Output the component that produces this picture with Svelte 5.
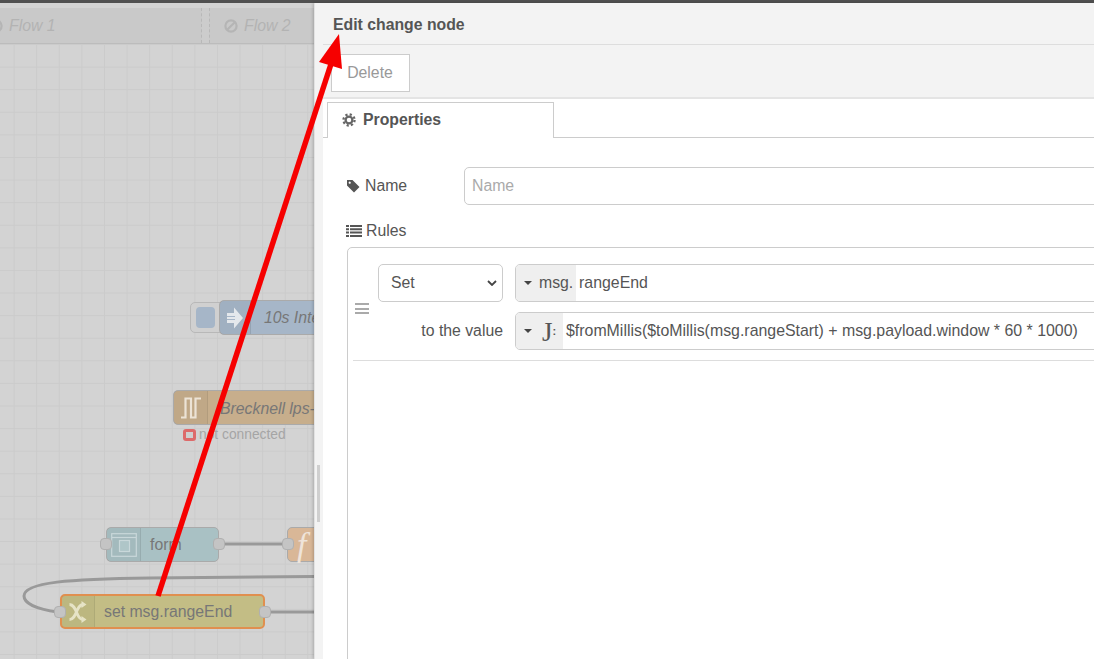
<script>
    // only the flow tabs come from data, the rest is static
    const tabs = [
        { label: "Flow 1", width: 202, padding: 0, iconShift: -11 },
        { label: "Flow 2", width: 105, padding: 14, iconShift: 0 }
    ];
</script>

<div class="page">
    <div class="topbar"></div>
    <div class="main">
        <section class="canvas">
            <div class="flow-tabs">
                {#each tabs as tab}
                    <div class="flow-tab" style="width: {tab.width}px; padding-left: {tab.padding}px">
                        <svg class="ban" style="margin-left: {tab.iconShift}px" viewBox="0 0 14 14" width="14" height="14">
                            <circle cx="7" cy="7" r="5.600" fill="none" stroke="#b5b5b5" stroke-width="2.200" />
                            <path d="M3.200 10.800 L10.800 3.200" stroke="#b5b5b5" stroke-width="2.200" />
                        </svg>
                        <span>{tab.label}</span>
                    </div>
                {/each}
            </div>
            <div class="workspace">
                <svg class="wires" width="314" height="615" viewBox="0 44 314 615">
                    <path d="M225 544 H283" class="wire" />
                    <path d="M265 612 H314" class="wire" />
                    <path d="M58 612 C36 609 24 603 24 596 C24 582 70 579 150 578 L314 576.500" class="wire" />
                </svg>

                <div class="node inject-btn"><i></i></div>
                <div class="node inject">
                    <div class="node-icon">
                        <svg viewBox="0 0 18 24" width="18" height="24">
                            <path d="M1 7h7V1.500l9 10.500-9 10.500V17H1z" fill="#e4e8ec" />
                            <path d="M1 10.500h8M1 13.500h8" stroke="#a6b6c8" stroke-width="1" />
                        </svg>
                    </div>
                    <span class="node-label italic">10s Inte</span>
                </div>

                <div class="node tcp">
                    <div class="node-icon">
                        <svg viewBox="0 0 22 22" width="22" height="22">
                            <path d="M1 20.500H5.500V1.500H11V20.500H15.500V1.500H21" fill="none" stroke="#ece3d6" stroke-width="2.200" />
                        </svg>
                    </div>
                    <span class="node-label italic">Brecknell lps-</span>
                </div>
                <div class="status">
                    <i></i><span>not connected</span>
                </div>

                <div class="node form">
                    <div class="node-icon">
                        <svg viewBox="0 0 26 24" width="26" height="24">
                            <rect x="0.700" y="0.700" width="24.600" height="22.600" fill="none" stroke="#c9d8da" stroke-width="1.200" />
                            <path d="M1 4.500h24" stroke="#c9d8da" stroke-width="1.200" />
                            <rect x="8.500" y="7.500" width="10" height="11" fill="#afc6c8" stroke="#c9d8da" stroke-width="1.200" />
                        </svg>
                    </div>
                    <span class="node-label">form</span>
                </div>
                <div class="port" style="left: 100px; top: 494px"></div>
                <div class="port" style="left: 213px; top: 494px"></div>

                <div class="node func">
                    <span class="func-f">f</span>
                </div>
                <div class="port" style="left: 282px; top: 494px"></div>

                <div class="node change">
                    <div class="node-icon">
                        <svg viewBox="0 0 18 22" width="18" height="22">
                            <path d="M0.500 3.500c7.500 0 6.500 15 13.500 15M0.500 18.500c7.500 0 6.500-15 13.500-15" fill="none" stroke="#e6e3c6" stroke-width="2.800" />
                            <path d="M12.500 0l5 3.500-5 3.500zM12.500 15l5 3.500-5 3.500z" fill="#e6e3c6" />
                        </svg>
                    </div>
                    <span class="node-label">set msg.rangeEnd</span>
                </div>
                <div class="port" style="left: 54px; top: 562px"></div>
                <div class="port" style="left: 259px; top: 562px"></div>
            </div>
        </section>

        <section class="tray">
            <div class="tray-handle"><i></i></div>
            <div class="tray-body">
                <header class="tray-title">Edit change node</header>
                <div class="tray-toolbar">
                    <button type="button" class="delete">Delete</button>
                </div>
                <div class="tab-strip">
                    <div class="tab">
                        <svg viewBox="0 0 14 14" width="14" height="14">
                            <circle cx="7" cy="7" r="5.600" fill="none" stroke="#666" stroke-width="2.200" stroke-dasharray="2.200 2.200" />
                            <circle cx="7" cy="7" r="3.400" fill="none" stroke="#666" stroke-width="2.300" />
                        </svg>
                        Properties
                    </div>
                </div>
                <div class="form-area">
                    <div class="name-row">
                        <label for="node-name">
                            <svg viewBox="0 0 14 14" width="14" height="14">
                                <path d="M1 1h5.500l7 7-5.500 5.500-7-7zM3.700 2.600a1.100 1.100 0 1 0 .01 0z" fill="#555" fill-rule="evenodd" />
                            </svg>
                            Name
                        </label>
                        <input id="node-name" placeholder="Name" />
                    </div>
                    <div class="rules-label">
                        <svg viewBox="0 0 16 12" width="16" height="12">
                            <path d="M0 0h3v2H0zM4 0h12v2H4zM0 3.300h3v2H0zM4 3.300h12v2H4zM0 6.600h3v2H0zM4 6.600h12v2H4zM0 10h3v2H0zM4 10h12v2H4z" fill="#555" />
                        </svg>
                        Rules
                    </div>
                    <div class="rules-box">
                        <div class="rule">
                            <div class="grip"><i></i><i></i><i></i></div>
                            <div class="rule-fields">
                                <div class="rule-line">
                                    <div class="fake-select">
                                        <span>Set</span>
                                        <svg viewBox="0 0 10 6" width="10" height="6">
                                            <path d="M1 1l4 4 4-4" fill="none" stroke="#444" stroke-width="1.800" />
                                        </svg>
                                    </div>
                                    <div class="typed">
                                        <div class="type-btn msg"><b class="caret"></b><span>msg.</span></div>
                                        <span class="typed-value">rangeEnd</span>
                                    </div>
                                </div>
                                <div class="rule-line">
                                    <span class="to-value">to the value</span>
                                    <div class="typed">
                                        <div class="type-btn jsonata"><b class="caret"></b><span class="j">J<small>:</small></span></div>
                                        <span class="typed-value">$fromMillis($toMillis(msg.rangeStart) + msg.payload.window * 60 * 1000)</span>
                                    </div>
                                </div>
                            </div>
                        </div>
                    </div>
                </div>
            </div>
        </section>
    </div>

    <svg class="arrow" width="1094" height="659" viewBox="0 0 1094 659">
        <path d="M158 596 L331 64" stroke="#f60000" stroke-width="5.500" />
        <path d="M339 34 L319 62 L342 69 Z" fill="#f60000" />
    </svg>
</div>

<style>
    :global(body) {
        margin: 0;
        overflow: hidden;
    }
    .page {
        position: relative;
        width: 1094px;
        height: 659px;
        overflow: hidden;
        font-family: "Liberation Sans", Arial, sans-serif;
        font-size: 15.8px;
        color: #555;
        background: #fff;
    }
    .topbar {
        height: 3px;
        background: #505050;
    }
    .main {
        display: flex;
        height: 656px;
    }

    /* left: dimmed flow canvas */
    .canvas {
        width: 314px;
        flex: none;
        overflow: hidden;
        background: #d3d3d3;
    }
    .flow-tabs {
        display: flex;
        gap: 7px;
        height: 41px;
        padding-top: 5px;
        box-sizing: border-box;
        border-bottom: 1px solid #bcbcbc;
        background: linear-gradient(#d3d3d3 5px, #cccccc 5px);
    }
    .flow-tab {
        display: flex;
        align-items: center;
        gap: 6px;
        box-sizing: border-box;
        flex: none;
        background: #c9c9c9;
        border-right: 1px dashed #b8b8b8;
        border-left: 1px dashed #b8b8b8;
        color: #b3b3b3;
        font-style: italic;
    }
    .flow-tab:first-child {
        border-left: 0;
    }
    .flow-tab:last-child {
        border-right: 0;
    }
    .ban {
        flex: none;
    }
    .workspace {
        position: relative;
        height: 615px;
        background-color: #d3d3d3;
        background-image:
            linear-gradient(#cbcbcb 1px, transparent 1px),
            linear-gradient(90deg, #cbcbcb 1px, transparent 1px);
        background-size: 22.6px 22.6px;
        background-position: -9px 0;
    }
    .wires {
        position: absolute;
        left: 0;
        top: 0;
    }
    .wire {
        fill: none;
        stroke: #999;
        stroke-width: 3;
    }
    .node {
        position: absolute;
        display: flex;
        align-items: center;
        box-sizing: border-box;
        height: 35px;
        border: 1px solid #aaa;
        border-radius: 5px;
        color: #777;
    }
    .node-icon {
        display: flex;
        align-items: center;
        justify-content: center;
        flex: none;
        height: 100%;
        border-right: 1px solid rgba(0, 0, 0, 0.07);
        background: rgba(0, 0, 0, 0.03);
    }
    .node-label {
        white-space: nowrap;
    }
    .italic {
        font-style: italic;
    }
    .inject-btn {
        left: 190px;
        top: 258px;
        width: 40px;
        height: 31px;
        border-color: #b8b8b8;
        background: #d0d0d0;
    }
    .inject-btn i {
        display: block;
        width: 19px;
        height: 21px;
        margin-left: 5px;
        border-radius: 4px;
        background: #a6b6c8;
    }
    .inject {
        left: 219px;
        top: 256px;
        width: 110px;
        background: #a6b6c8;
    }
    .inject .node-icon {
        width: 30px;
    }
    .inject .node-label {
        margin-left: 13px;
    }
    .tcp {
        left: 173px;
        top: 346px;
        width: 160px;
        background: #c7ae8c;
    }
    .tcp .node-icon {
        width: 33px;
    }
    .tcp .node-label {
        margin: 2px 0 0 12px;
    }
    .status {
        position: absolute;
        left: 183px;
        top: 383px;
        display: flex;
        align-items: center;
        gap: 3px;
        font-size: 13.8px;
        color: #a5a5a5;
        white-space: nowrap;
    }
    .status i {
        display: block;
        box-sizing: border-box;
        width: 13px;
        height: 12px;
        border: 3px solid #dd6a6a;
        border-radius: 3px;
        background: #cfcfcf;
    }
    .form {
        left: 106px;
        top: 483px;
        width: 113px;
        background: #a9c1c4;
    }
    .form .node-icon {
        width: 33px;
    }
    .form .node-label {
        margin-left: 9px;
    }
    .func {
        left: 287px;
        top: 483px;
        width: 40px;
        background: #d9b797;
    }
    .func-f {
        margin-left: 9px;
        font-family: "Liberation Serif", serif;
        font-style: italic;
        font-size: 34px;
        line-height: 30px;
        color: #efe4da;
    }
    .change {
        left: 60px;
        top: 550px;
        width: 205px;
        border: 2px solid #e08f4f;
        background: #c3bd85;
    }
    .change .node-icon {
        width: 32px;
    }
    .change .node-label {
        margin-left: 9px;
    }
    .port {
        position: absolute;
        box-sizing: border-box;
        width: 12px;
        height: 12px;
        border: 1px solid #b0b0b0;
        border-radius: 4px;
        background: #c4c4c4;
    }

    /* right: edit tray */
    .tray {
        position: relative;
        display: flex;
        flex: 1;
        min-width: 0;
        box-shadow: -1px 0 3px rgba(0, 0, 0, 0.2);
    }
    .tray-handle {
        display: flex;
        align-items: center;
        flex: none;
        width: 9px;
        background: #f3f3f3;
        border-left: 1px solid #e2e2e2;
        box-sizing: border-box;
    }
    .tray-handle i {
        display: block;
        width: 3px;
        height: 57px;
        margin: 325px 0 0 2px;
        background: #cfcfcf;
    }
    .tray-body {
        flex: 1;
        min-width: 0;
        background: #fff;
    }
    .tray-title {
        box-sizing: border-box;
        height: 42px;
        padding: 13px 0 0 10px;
        background: #f3f3f3;
        border-bottom: 1px solid #ddd;
        font-weight: bold;
        color: #555;
        line-height: 17px;
    }
    .tray-toolbar {
        box-sizing: border-box;
        height: 54px;
        padding: 9px 0 0 8px;
        background: #f3f3f3;
        border-bottom: 2px solid #e4e4e4;
    }
    .delete {
        box-sizing: border-box;
        width: 79px;
        height: 38px;
        padding: 0 1px 1px 0;
        background: #fff;
        border: 1px solid #ccc;
        font: inherit;
        color: #999;
    }
    .tab-strip {
        box-sizing: border-box;
        height: 39px;
        padding: 3px 0 0 4px;
        border-bottom: 1px solid #ccc;
    }
    .tab {
        display: flex;
        align-items: center;
        gap: 7px;
        box-sizing: border-box;
        width: 227px;
        height: 36px;
        padding: 0 0 1px 14px;
        background: #fff;
        border: 1px solid #ccc;
        border-bottom: 0;
        font-weight: bold;
    }
    .form-area {
        padding: 29px 0 0 23px;
    }
    .name-row {
        display: flex;
        align-items: center;
    }
    .name-row label {
        display: flex;
        align-items: center;
        gap: 5px;
        width: 118px;
        flex: none;
    }
    .name-row input {
        box-sizing: border-box;
        width: 800px;
        height: 38px;
        flex: none;
        padding: 0 7px;
        border: 1px solid #ccc;
        border-radius: 5px;
        font: inherit;
        color: #555;
    }
    .name-row input::placeholder {
        color: #aaa;
        opacity: 1;
    }
    .rules-label {
        display: flex;
        align-items: center;
        gap: 4px;
        height: 17px;
        margin-top: 17px;
    }
    .rules-box {
        box-sizing: border-box;
        width: 900px;
        height: 500px;
        margin-top: 8px;
        margin-left: 1px;
        padding: 0 0 0 5px;
        border: 1px solid #ccc;
        border-radius: 5px;
    }
    .rule {
        display: flex;
        align-items: flex-start;
        height: 113px;
        padding-top: 16px;
        box-sizing: border-box;
        border-bottom: 1px solid #ddd;
    }
    .grip {
        display: flex;
        flex-direction: column;
        gap: 2.500px;
        width: 25px;
        flex: none;
        padding: 39px 0 0 2px;
        box-sizing: border-box;
    }
    .grip i {
        display: block;
        width: 14px;
        height: 2px;
        background: #aaa;
    }
    .rule-fields {
        display: flex;
        flex-direction: column;
        gap: 10px;
    }
    .rule-line {
        display: flex;
        align-items: center;
        gap: 12px;
    }
    .fake-select {
        display: flex;
        align-items: center;
        justify-content: space-between;
        box-sizing: border-box;
        width: 125px;
        height: 38px;
        padding: 0 5px 0 12px;
        border: 1px solid #ccc;
        border-radius: 5px;
    }
    .to-value {
        width: 125px;
        text-align: right;
    }
    .typed {
        display: flex;
        align-items: center;
        box-sizing: border-box;
        width: 700px;
        height: 38px;
        border: 1px solid #ccc;
        border-radius: 5px;
        overflow: hidden;
    }
    .type-btn {
        display: flex;
        align-items: center;
        flex: none;
        height: 100%;
        box-sizing: border-box;
        padding-left: 8px;
        background: #efefef;
    }
    .msg {
        width: 60px;
        gap: 7px;
    }
    .jsonata {
        width: 47px;
        gap: 10px;
    }
    .j {
        font-family: "Liberation Serif", serif;
        font-size: 27px;
        line-height: 24px;
        color: #555;
    }
    .j small {
        font-family: "Liberation Sans", sans-serif;
        font-size: 11px;
        font-weight: bold;
        vertical-align: 6px;
    }
    .caret {
        width: 0;
        height: 0;
        border-left: 4.500px solid transparent;
        border-right: 4.500px solid transparent;
        border-top: 4.500px solid #444;
    }
    .typed-value {
        margin-left: 3px;
        font-size: 15.9px;
        white-space: nowrap;
    }
    .arrow {
        position: absolute;
        left: 0;
        top: 0;
        pointer-events: none;
    }
</style>
